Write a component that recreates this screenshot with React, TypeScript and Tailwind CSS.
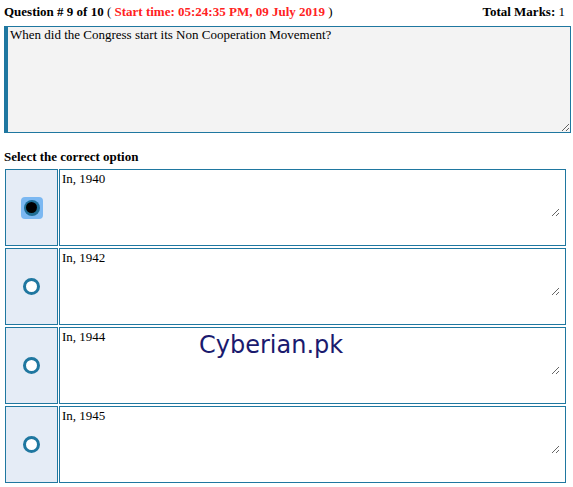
const options = ["In, 1940", "In, 1942", "In, 1944", "In, 1945"];

const Radio: React.FC<{ checked?: boolean }> = ({ checked }) => {
  if (checked) {
    return (
      <span className="flex h-[22px] w-[22px] items-center justify-center rounded-[4px] bg-[#7bb8f2]">
        <span className="flex h-[16px] w-[16px] items-center justify-center rounded-full bg-[#1f6e96]">
          <span className="h-[11px] w-[11px] rounded-full bg-black"></span>
        </span>
      </span>
    );
  }
  return <span className="block h-[17px] w-[17px] rounded-full border-[3.5px] border-[#1f77a0] bg-white"></span>;
};

export default function App() {
  return (
    <div className="relative min-h-[487px] w-[573px] bg-white px-[4px] pt-[3px] font-['Liberation_Serif',serif] text-[13px] text-black">
      <div className="flex h-[18px] items-center justify-between pr-[4px]">
        <div>
          <b>Question # 9 of 10</b> ( <b className="text-[#ff2222]">Start time: 05:24:35 PM, 09 July 2019</b> )
        </div>
        <div>
          <b>Total Marks:</b> 1
        </div>
      </div>

      <textarea
        readOnly
        className="mt-[5px] block h-[107px] w-[567px] border border-l-[4px] border-[#1f77a0] bg-[#f3f3f3] px-[2px] py-0 leading-[15px] outline-none"
        defaultValue="When did the Congress start its Non Cooperation Movement?"
      />

      <h4 className="mt-[15px] h-[18px] text-[13px] font-bold leading-[18px]">Select the correct option</h4>

      <div className="mt-[3px] flex flex-col gap-y-[2px] pl-[1px]">
        {options.map((opt, i) => (
          <div key={opt} className="flex h-[77px] gap-x-[1px]">
            <div className="flex w-[53px] items-center justify-center border border-[#1f77a0] bg-[#e5ecf6]">
              <Radio checked={i === 0} />
            </div>
            <div className="w-[507px] border border-[#1f77a0] bg-white pl-[1px]">
              <textarea
                readOnly
                className="block h-[47px] w-[499px] bg-white px-[1px] py-[1px] leading-[15px] outline-none"
                defaultValue={opt}
              />
            </div>
          </div>
        ))}
      </div>

      <div className="absolute left-[199px] top-[330px] font-['DejaVu_Sans',sans-serif] text-[24px] leading-[30px] text-[#1a1a6e]">
        Cyberian.pk
      </div>
    </div>
  );
}
